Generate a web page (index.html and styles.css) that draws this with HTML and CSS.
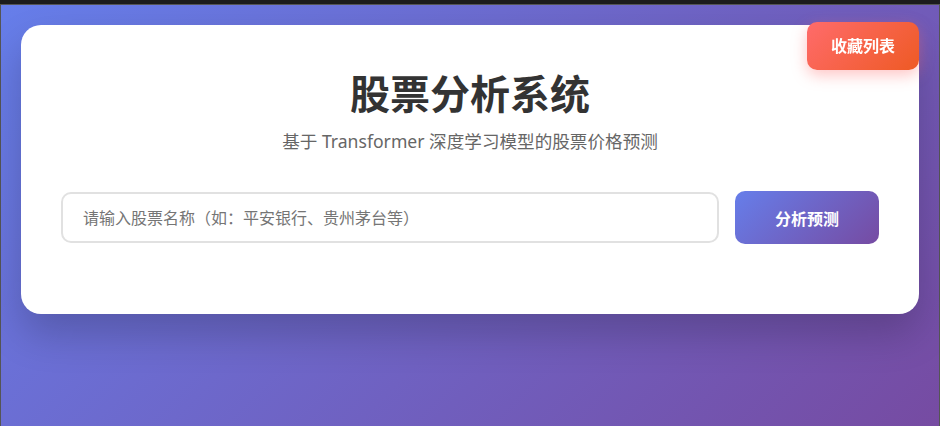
FILE: index.html
```html
<!DOCTYPE html>
<html lang="zh-CN">
<head>
  <meta charset="UTF-8" />
  <meta name="viewport" content="width=device-width, initial-scale=1.0"/>
  <title>股票分析系统</title>
  <link rel="stylesheet" href="styles.css">
</head>
<body>
  <div class="page">
    <button class="favorites-btn" id="favorites-btn">收藏列表</button>

    <div class="container">
      <div class="header">
        <h1>股票分析系统</h1>
        <p>基于 Transformer 深度学习模型的股票价格预测</p>
      </div>

      <div class="search-box">
        <input type="text" id="stock-input" class="stock-input" placeholder="请输入股票名称（如：平安银行、贵州茅台等）">
        <button class="analyze-btn" id="analyze-btn">分析预测</button>
      </div>
    </div>
  </div>
</body>
</html>
```

FILE: styles.css
```css
* {
  box-sizing: border-box;
}

html {
  background-color: #1c1c1c;
}

body {
  font-family: "Noto Sans", "Noto Sans CJK SC", sans-serif;
  margin: 0;
  padding-top: 4px;
  height: 100vh;
}

.page {
  height: 100%;
  padding: 20px;
  border: 1px solid #555;
  border-bottom: none;
  background: linear-gradient(135deg, #667eea 0%, #764ba2 100%);
}

.container {
  background-color: white;
  border-radius: 20px;
  padding: 40px;
  box-shadow: 0 20px 40px rgba(0, 0, 0, 0.2);
}

.header {
  text-align: center;
  margin-bottom: 36px;
}

.header h1 {
  margin: 0 0 5px;
  font-size: 40px;
  line-height: 58px;
  font-weight: bold;
  color: #333;
}

.header p {
  margin: 0;
  font-size: 17.6px;
  line-height: 27px;
  color: #666;
}

.search-box {
  display: flex;
  align-items: center;
  gap: 16px;
  margin-bottom: 30px;
}

.stock-input {
  flex: 1;
  height: 51px;
  padding: 0 20px;
  font-family: inherit;
  font-size: 16px;
  border: 2px solid #e1e1e1;
  border-radius: 10px;
  outline: none;
}

.stock-input::placeholder {
  color: #757575;
}

.analyze-btn {
  height: 53px;
  padding: 0 40px;
  font-family: inherit;
  font-size: 16px;
  font-weight: bold;
  color: white;
  border: none;
  border-radius: 10px;
  cursor: pointer;
  background: linear-gradient(135deg, #667eea 0%, #764ba2 100%);
}

/* 收藏列表 按钮 */
.favorites-btn {
  position: fixed;
  top: 22px;
  right: 21px;
  padding: 12px 24px;
  font-family: inherit;
  font-size: 16px;
  line-height: 24px;
  font-weight: bold;
  color: white;
  border: none;
  border-radius: 10px;
  cursor: pointer;
  background: linear-gradient(135deg, #ff6b6b 0%, #ee5a24 100%);
  box-shadow: 0 5px 15px rgba(255, 107, 107, 0.4);
  z-index: 10;
}
```
